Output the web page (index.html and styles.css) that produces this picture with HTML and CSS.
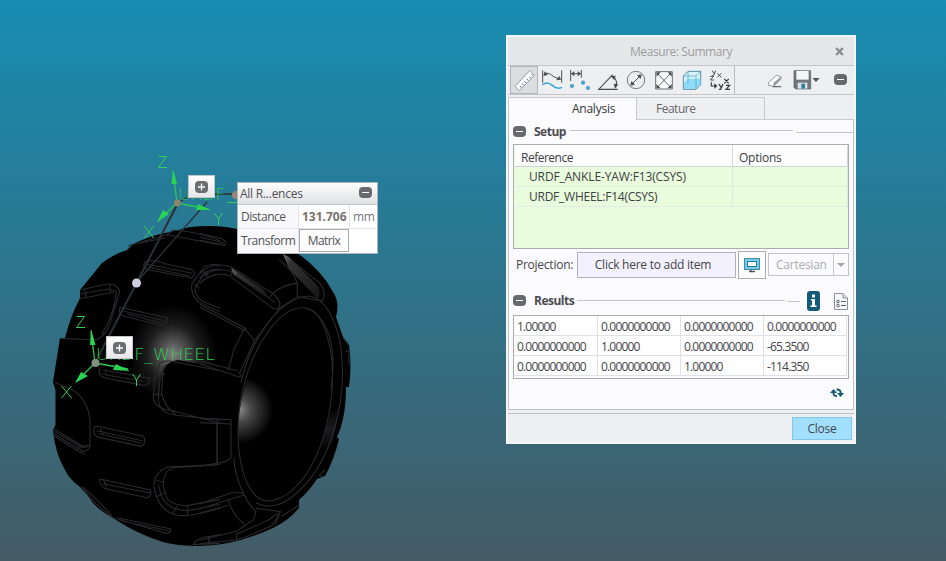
FILE: index.html
```html
<!DOCTYPE html>
<html lang="en">
<head>
<meta charset="utf-8">
<title>Measure: Summary</title>
<link rel="stylesheet" href="styles.css">
</head>
<body>
<main class="viewport">
<svg class="scene" width="946" height="561" viewBox="0 0 946 561">
  <defs>
    <radialGradient id="shine"><stop offset="0" stop-color="#808080"/><stop offset=".25" stop-color="#545454"/><stop offset=".6" stop-color="#1b1b1b"/><stop offset="1" stop-color="#000"/></radialGradient>
    <radialGradient id="hub" gradientUnits="userSpaceOnUse" cx="239" cy="410" r="34"><stop offset="0" stop-color="#8b8b8b"/><stop offset=".35" stop-color="#474747"/><stop offset="1" stop-color="#000"/></radialGradient>
    <linearGradient id="glint" x1="0" y1="0" x2="1" y2="1"><stop offset="0" stop-color="#777"/><stop offset=".2" stop-color="#333"/><stop offset="1" stop-color="#151517"/></linearGradient>
    <linearGradient id="lip" x1="0" y1="0" x2="0" y2="1"><stop offset="0" stop-color="#000"/><stop offset=".5" stop-color="#1c1c1e"/><stop offset="1" stop-color="#000"/></linearGradient>
    <clipPath id="rim"><path d="M306 308C282 304 255 347 243 393C233 431 238 477 257 497C268 507 291 497 307 473C329 439 337 384 330 348C325 323 318 311 306 308Z"/></clipPath>
  </defs>
  <path d="M127 250L135 243Q155 234 170 232L190 227Q217 224 237 229L270 239L300 255Q322 271 333 292Q340 302 336 317L343 337L349 345Q352 365 349 387H346Q346 418 337 437L339 439Q334 460 325 476L317 479Q309 491 299 500V508Q289 520 275 527Q235 546 200 546Q177 546 163 542Q137 534 113 518Q101 512 93 503Q87 494 80 487Q70 480 65 470Q55 453 53 430L55.500 425V390L53 382L60 338H65Q71 315 80 298V290L102 263Q114 254 127 250Z"/>
  <ellipse cx="173" cy="354" rx="44" ry="49" fill="url(#shine)"/>
  <path d="M160 398V378Q163 362 178 360Q215 366 241 375L231 421Q198 417 173 418Q160 414 160 398Z"/>
  <g clip-path="url(#rim)"><circle cx="239" cy="410" r="34" fill="url(#hub)"/></g>
  <path d="M331 413L340 406L332 446L318 452Z" fill="url(#lip)"/>
  <g class="edges">
    <path d="M306 308C280 304 252 347 242 393C234 432 238 478 256 496C269 508 291 497 307 473C329 439 337 384 330 348C325 323 318 311 306 308Z"/>
    <path d="M241 383C249 344 277 298 309 296C325 298 336 319 341 348C348 405 329 462 301 489C283 507 270 509 256 503"/>
  </g>
  <g class="edges" transform="translate(40 220) scale(.33333)">
    <path d="M315 125Q335 117 380 132L460 150Q470 162 455 174L325 149Q303 144 315 125ZM322 133L456 160M325 142L450 168"/>
    <path d="M240 262Q235 281 247 287L370 318L382 305V293L260 266ZM252 274L376 303M262 282L371 311"/>
    <path d="M120 210L190 194Q232 185 239 214L217 288Q200 350 167 360L60 355M120 222L205 207L231 215M120 236L220 217M133 210L139 232M210 193L211 217M229 218Q222 285 185 343"/>
    <path d="M180 444Q170 466 196 474L310 496Q330 495 328 475L190 450M187 463L310 484M195 450L202 470"/>
    <path d="M539 138Q501 125 485 151L456 190Q449 219 475 245L539 275M539 148Q505 145 490 164L468 199Q458 219 484 242L539 265M485 151L502 170M462 190L478 205"/>
    <path d="M360 430L343 478L340 535Q350 568 390 570L540 610M380 433Q356 465 355 540Q360 580 405 585L540 600M370 437L365 520Q370 550 399 578M360 458L375 462M343 524L364 525M399 572L406 585M360 430Q375 420 394 424L540 452"/>
    <path d="M265 77L380 44L400 31M280 73L375 54M400 31Q450 30 540 62M380 44L540 74M260 92L275 76"/>
    <path d="M45 487L92 507Q145 535 150 605V680Q146 692 129 694L43 643M43 628L129 679L143 675"/>
  </g>
  <g class="edges" transform="translate(40 390) scale(.33333)">
    <path d="M163 110Q155 139 181 143L304 169Q320 161 311 139L175 109ZM170 122L310 153M176 131L304 159M180 113L190 135"/>
    <path d="M179 268Q180 294 205 298L321 323Q338 320 331 300L195 270ZM189 281L334 310M190 268L200 292"/>
    <path d="M125 290Q180 333 220 384Q178 355 145 316ZM225 385L380 430Q397 427 390 416L236 384M244 392L387 422"/>
    <path d="M540 223L385 231Q342 245 342 289Q352 359 405 374Q440 385 540 355M540 224L400 233Q367 245 370 289L382 328Q407 347 440 347L540 329M345 270L370 277M351 320L374 308M399 370L411 348M442 378L444 348M355 284L363 315Q380 360 444 362L540 343M532 100V222"/>
    <path d="M40 123L118 168Q130 178 150 166M41 137L113 182L133 192M118 168L109 184M540 434L485 443Q458 457 460 464L540 460M508 439L507 462"/>
  </g>
  <g class="edges" transform="translate(200 220) scale(.33333)">
    <path d="M0 160Q40 120 95 142L211 216Q240 235 240 252Q234 278 211 259L88 167Q43 151 0 189M0 174Q43 138 93 154L225 248M99 145L92 167M219 219L207 236M17 154L25 166"/>
    <path d="M0 253L134 324L163 363L118 461Q128 466 118 471L0 432M0 261L135 333M134 324L102 388L84 453M0 423L115 453M163 363L240 263M219 219Q249 194 292 190V230L368 243M237 119Q300 169 292 215M260 110L360 190Q380 218 368 243M240 263Q285 236 292 230M0 40L65 56Q83 66 75 76L0 61M0 51L72 69M430 355L447 376M435 395L447 390V435M325 265Q420 320 393 510"/>
  </g>
  <g class="edges" transform="translate(200 390) scale(.33333)">
    <path d="M0 85L93 89V202Q83 217 54 219L0 229M51 87V219M93 102L0 98M102 202Q102 251 130 310Q148 349 168 364L161 389Q142 400 110 424L0 451M130 310L102 306L0 341M0 356L81 331L132 315M0 369L85 346M85 332Q101 379 133 402M168 355L242 365L217 405Q170 430 110 450L0 461M110 429V450M25 440L28 460M235 370L205 390L110 433M240 366L235 382L225 407M298 345L245 379M375 238L358 255L370 261"/>
  </g>
  <path d="M231 268L234 275L271 300L263 289Z" fill="url(#glint)"/>
  <path d="M283 254L289 257L317 285Q322 292 318 299L289 269Z" fill="url(#glint)"/>
  <g class="measure">
    <path d="M178 203L95 363" stroke-width="2"/><path d="M177 203L188 197M207 202L136 283" stroke-width="1.300"/><path d="M214 194H235" stroke-width="1.500"/>
  </g>
  <circle cx="136.500" cy="283" r="4.500" fill="#cfd0df"/>
  <circle cx="236" cy="195" r="4" fill="#9b8475"/>
  <g class="axes">
    <path d="M177 203L173 171M177 203L208 209M177 203L158 221"/>
    <path class="head" d="M173 169L171.500 184H177ZM211 210L196 210L198 204ZM157 222L163 210L169 214Z"/>
  </g>
  <g class="axes">
    <path d="M95 363L91 331M95 363L128 369M95 363L77 381"/>
    <path class="head" d="M91 329L90 345H95.500ZM130 371L113 370L116 364ZM75 383L81 372L88 376Z"/>
  </g>
  <circle cx="177.500" cy="203" r="3.500" fill="#8c856b"/><circle cx="95.500" cy="363" r="4" fill="#819080"/>
  <g class="cad">
    <text x="178" y="200" textLength="47" lengthAdjust="spacingAndGlyphs">URDF</text><path d="M227 202.500H237"/>
    <text x="96" y="360" textLength="119" lengthAdjust="spacingAndGlyphs">URDF_WHEEL</text>
    <path d="M158.500 156.500H166.500L158.500 167.500H167M144.500 226L153.500 238M153.500 226L144.500 238M214.500 213L218.500 219L222.500 213M218.500 219V225M76.500 316.500H84.500L76.500 327.500H85M61.500 386L71.500 398M71.500 386L61.500 398M132.500 374L136.500 380L140.500 374M136.500 380V386"/>
  </g>
</svg>

<button class="tag tag-yaw" aria-label="Expand"><svg width="13" height="12"><rect width="13" height="12" rx="4" fill="#6c6d72"/><path d="M3 6H10M6.500 2.500V9.500" stroke="#fff" stroke-width="1.300"/></svg></button>
<button class="tag tag-wheel" aria-label="Expand"><svg width="13" height="12"><rect width="13" height="12" rx="4" fill="#6c6d72"/><path d="M3 6H10M6.500 2.500V9.500" stroke="#fff" stroke-width="1.300"/></svg></button>

<section class="callout">
  <header><span>All R...ences</span><i class="minus"></i></header>
  <div class="callout-row"><span class="lab">Distance</span><b>131.706</b><span class="unit">mm</span></div>
  <div class="callout-row second"><span class="lab">Transform</span><button class="matrix">Matrix</button><span></span></div>
</section>

<section class="dialog">
  <header class="title"><span>Measure: Summary</span>
    <svg class="x" width="9" height="9"><path d="M1.200 1L7.800 8M7.800 1L1.200 8" stroke="#8d8e91" stroke-width="2.500"/></svg>
  </header>
  <nav class="toolbar">
    <span class="tool active"><svg viewBox="30 108 84 84"><path d="M45 169L90 121L103 136L58 182Z" fill="#fbfcfd" stroke="#888b90" stroke-width="2.500"/><path d="M60 168L64 173M67 161L71 166M74 154L78 159M81 147L85 152M88 140L92 145M95 133L98 137" stroke="#22638c" stroke-width="2.700"/></svg></span>
    <span class="tool"><svg viewBox="114 108 84 84"><path d="M128 121V158M185 121V158M132 134C150 119 156 147 181 145" fill="none" stroke="#4b4d50" stroke-width="3"/><path d="M130 138L134 124L144 135ZM183 149L168 151L178 138Z" fill="#4b4d50"/><path d="M127 164Q143 153 157 166T186 172" fill="none" stroke="#35a4cf" stroke-width="4.500"/></svg></span>
    <span class="tool"><svg viewBox="198 108 84 84"><path d="M212 120V153M244 120V143M215 131H241" stroke="#4b4d50" stroke-width="3"/><path d="M213 131L223 123V139ZM243 131L233 123V139Z" fill="#4b4d50"/><g fill="#42a8d0" stroke="#22779b"><circle cx="216" cy="168" r="5.500"/><circle cx="249" cy="158" r="5.500"/><circle cx="264" cy="174" r="5.500"/></g></svg></span>
    <span class="tool"><svg viewBox="282 108 84 84"><path d="M338 134L296 178H353M342 142Q354 153 347 171" fill="none" stroke="#4b4d50" stroke-width="3.300"/><path d="M332 138L347 137L343 151ZM341 161L355 163L345 176Z" fill="#4b4d50"/></svg></span>
    <span class="tool"><svg viewBox="366 108 84 84"><circle cx="408" cy="150" r="26" fill="none" stroke="#6a6c6e" stroke-width="2.700"/><path d="M395 163L421 137" stroke="#4b4d50" stroke-width="3"/><path d="M425 133L422 147L411 136ZM391 167L394 153L405 164Z" fill="#4b4d50"/></svg></span>
    <span class="tool"><svg viewBox="450 108 84 84"><path d="M467 125H517V177H467Z" fill="#fafafa" stroke="#5f6264" stroke-width="2.700"/><path d="M474 132L510 170M510 132L474 170" stroke="#4b4d50" stroke-width="2.500"/><path d="M469 127H482L470 140ZM515 127V140L503 127ZM469 175V162L482 175ZM515 175H502L515 162Z" fill="#4b4d50"/></svg></span>
    <span class="tool"><svg viewBox="-6 108 84 84"><path d="M10 138L24 124H62V164L48 178H10Z" fill="#d7f3fd" stroke="#3a7994" stroke-width="2.500"/><path d="M12 158L25 146H61V163L47 176H12Z" fill="#8edafa"/><path d="M10 138H48L62 124M48 138V178M24 125V160" fill="none" stroke="#4a9dbb" stroke-width="2"/></svg></span>
    <span class="tool"><svg viewBox="78 108 84 84"><g fill="none" stroke="#4b4c50" stroke-width="3"><path d="M97 122L102 131M107 122L101 136H97M90 139H101L91 150H102M112 130L124 142M124 130L112 142"/><path stroke="#37383b" stroke-width="3.500" d="M94 157V168H107M117 162L123 172M129 162L122 178H117M133 147L146 160M146 147L133 160M138 166H149L138 178H150"/></g><path d="M103 160L112 168L103 176Z" fill="#37383b"/></svg></span>
    <span class="divider"></span>
    <span class="tool eraser"><svg viewBox="243 108 84 84"><path d="M266 158L289 136L303 140V147L281 169L266 166Z" fill="#fff" stroke="#77797c" stroke-width="2.300"/><path d="M280 159L302 140V148L281 169Z" fill="#999da3"/><path d="M278 170H304" stroke="#606266" stroke-width="3.500"/></svg></span>
    <span class="tool save"><svg viewBox="338 108 84 84"><path d="M341 122H391V177H346L341 172Z" fill="#71767d" stroke="#565b61" stroke-width="2"/><path d="M348 123H385V149H348Z" fill="#f5f6f7"/><path d="M352 158H381V176H352Z" fill="#dce3e8"/><path d="M363 161H374V176H363Z" fill="#317d9d"/><path d="M396 144H418L407 156Z" fill="#55575b"/></svg></span>
    <i class="minus tool-minus"></i>
  </nav>
  <div class="tabs"><div class="tab current"><span>Analysis</span></div><div class="tab"><span class="t-feature">Feature</span></div><div class="tab-rest"></div></div>
  <div class="body">
    <div class="section setup"><i class="minus"></i><h2>Setup</h2><span class="rule r1"></span><span class="rule r2"></span></div>
    <div class="refs">
      <div class="ref head"><span class="t-ref">Reference</span><span>Options</span></div>
      <div class="ref"><span class="t-yaw">URDF_ANKLE-YAW:F13(CSYS)</span><span></span></div>
      <div class="ref"><span>URDF_WHEEL:F14(CSYS)</span><span></span></div>
    </div>
    <div class="projection"><label>Projection:</label><button class="collector">Click here to add item</button>
      <button class="screen" aria-label="Screen"><svg width="16" height="15"><rect x=".5" y=".5" width="15" height="11" fill="#77cbe3" stroke="#438ba4"/><rect x="3.500" y="3.500" width="9" height="5" fill="#f4fbff" stroke="#2b7898"/><path d="M5 13.500H11M7 12V13" stroke="#4b5660" stroke-width="1.500"/></svg></button>
      <div class="select"><span>Cartesian</span><i></i></div></div>
    <div class="section results"><i class="minus"></i><h2>Results</h2><span class="rule r3"></span><span class="rule r4"></span>
      <svg class="info" width="13" height="20"><rect width="13" height="20" rx="3" fill="#145b77"/><path d="M5 3.500H8V6.500H5ZM4 8H8V14.500H9.500V16H3.500V14.500H5V9.500H4Z" fill="#fff"/></svg>
      <svg class="list" width="14" height="17"><path d="M.5 .5H9L13.500 5V16.500H.5Z" fill="#f7f8f9" stroke="#909396"/><path d="M9 .5V5H13.500" fill="#ddd" stroke="#909396"/><path d="M7 8.500H12M7 12.500H12" stroke="#626466"/><circle cx="4" cy="8.500" r="1.300" fill="none" stroke="#626466"/><circle cx="4" cy="12.500" r="1.300" fill="none" stroke="#626466"/></svg></div>
    <div class="matrix-grid">
      <span>1.00000</span><span>0.0000000000</span><span>0.0000000000</span><span>0.0000000000</span>
      <span>0.0000000000</span><span>1.00000</span><span>0.0000000000</span><span>-65.3500</span>
      <span>0.0000000000</span><span>0.0000000000</span><span>1.00000</span><span>-114.350</span>
    </div>
    <svg class="refresh" width="14" height="10"><path d="M3.300 4Q3.300 8.300 7 8M6.500 1.500Q10.700 1.200 10.700 5" fill="none" stroke="#135b76" stroke-width="2"/><path d="M0 5L3.500 1L7 5ZM7 5H14L10.500 9Z" fill="#135b76"/></svg>
  </div>
  <footer><button class="close">Close</button></footer>
</section>
</main>
</body>
</html>
```
FILE: styles.css
```css
* { box-sizing: border-box; }
body { margin: 0; overflow: hidden; }
button { margin: 0; padding: 0; font: inherit; color: inherit; letter-spacing: inherit; border-radius: 0; white-space: nowrap; }
.viewport { position: relative; width: 946px; height: 561px; font: 12px/16px "Open Sans", "Noto Sans", sans-serif; letter-spacing: -.25px; color: #444549; background: linear-gradient(#178db2 0%, #445b65 100%); }
span, b, h2, label { white-space: nowrap; }
.scene { display: block; }
.edges { fill: none; stroke: #29292c; }
.edges path { vector-effect: non-scaling-stroke; stroke-width: 1.1; }
.measure { fill: none; stroke: #2b3034; }
.axes { fill: none; stroke: #2bc953; stroke-width: 1.3; }
.axes .head { fill: #2bd354; stroke: none; }
.cad { fill: #2fc653; font: 200 16px "DejaVu Sans", sans-serif; letter-spacing: 0; }
.cad path { fill: none; stroke: #34cf57; stroke-width: 1; }

.minus { display: block; width: 13px; height: 11px; border-radius: 4px; background: linear-gradient(#fff, #fff) center / 7px 1px no-repeat #68696e; flex: none; }
.tag { position: absolute; width: 27px; height: 23px; display: grid; place-items: center; background: linear-gradient(#fff, #e7e7eb); border: 1px solid #c2c5cc; }
.tag-yaw { left: 188px; top: 175px; }
.tag-wheel { left: 106px; top: 336px; }

.callout { position: absolute; left: 237px; top: 182px; width: 141px; height: 72px; border: 1px solid #aeb5bb; background: #fff; color: #505155; }
.callout header { height: 22px; display: flex; align-items: center; justify-content: space-between; padding: 0 5px 0 2px; background: linear-gradient(#fdfdfd, #dfe0e3); border-bottom: 1px solid #c5c7cb; }
.callout header .minus { margin-top: -2px; }
.callout-row { height: 24px; display: grid; grid-template-columns: 61px 51px 1fr; align-items: center; border-bottom: 1px solid #e4e5e9; }
.callout-row > span, .callout-row > b { line-height: 23px; height: 23px; border-right: 1px solid #e2e3e9; padding-left: 3px; }
.callout-row .lab { background: #f9f9fb; letter-spacing: -.45px; }
.callout-row > :last-child { border-right: 0; }
.callout-row .unit { color: #77787b; }
.callout-row b { color: #77736e; letter-spacing: 0; }
.callout-row.second { border-bottom: 0; height: 23px; }
.matrix { width: 50px; height: 23px; background: #fdfdfe; border: 1px solid #a6a8ad; letter-spacing: -.6px; }

.dialog { position: absolute; left: 506px; top: 35px; width: 350px; height: 409px; border: 2px solid #f4f6f8; background: #eeeff1; }
.title { height: 29px; display: flex; align-items: center; padding: 1px 10px 0 122px; justify-content: space-between; color: #9b9ca0; background: #e6e7e9; border-bottom: 1px solid #c4c5c9; letter-spacing: -.43px; }
.x { margin-top: -1px; }
.toolbar { height: 29px; display: flex; padding-left: 2px; border-bottom: 1px solid #c6c7ca; align-items: flex-start; }
.tool { width: 28px; height: 28px; flex: none; }
.tool svg { width: 28px; height: 28px; display: block; }
.active { background: #dcdde0; box-shadow: inset 0 0 0 1px #b3b4b9; }
.divider { width: 1px; height: 28px; background: #babbc0; }
.eraser { margin-left: 26px; }
.save { margin-left: 4px; }
.tool-minus { margin: 8px 0 0 13px; }
.tabs { height: 25px; display: flex; padding-top: 2px; }
.tab { width: 128px; height: 23px; border: 1px solid #c9cacf; border-left: 0; padding: 3px 0 0 19px; color: #66676b; }
.t-feature { letter-spacing: -.5px; }
.current { background: #fbfbfd; border-bottom: 0; border-left: 1px solid #c9cacf; padding-left: 63px; width: 129px; color: #333438; }
.tab-rest { flex: 1; border-bottom: 1px solid #c9cacf; }
.body { width: 346px; height: 290px; padding-left: 4px; background: #fbfbfd; border: 1px solid #bfc0c6; border-top: 0; }
.section { display: flex; align-items: center; }
.section .minus { margin-top: -1px; }
.section h2 { margin: 0 0 0 8px; font-size: 12px; line-height: 16px; color: #4b4c50; letter-spacing: -.5px; }
.rule { height: 1px; background: #c6c7cb; flex: none; }
.setup { height: 24px; }
.r1 { width: 223px; margin: -3px 3px 0 auto; }
.r2 { width: 57px; }
.refs { width: 336px; height: 105px; border: 1px solid #abacb2; background: #e9fcdc; color: #3c4045; padding-left: 1px; }
.ref { width: 333px; height: 20px; display: grid; grid-template-columns: 218px 115px; border-bottom: 1px solid #dfeee4; line-height: 20px; }
.ref span { padding-left: 14px; border-right: 1px solid #dceae3; }
.ref .t-yaw { letter-spacing: -.13px; }
.ref.head { height: 22px; background: #fdfdfe; border-color: #cdd2d4; }
.ref.head span { line-height: 25px; padding-left: 6px; border-color: #d5d6db; }
.ref .t-ref { letter-spacing: -.5px; }
.projection { height: 28px; margin-top: 2px; width: 336px; display: flex; align-items: center; }
.projection label { width: 64px; padding-left: 3px; }
.collector { width: 159px; height: 26px; border: 1px solid #b2b1bd; background: #f4f1fe; padding-right: 7px; }
.screen { width: 28px; height: 28px; margin-left: 2px; display: grid; place-items: center; background: #fcfcfd; border: 1px solid #a9abaf; }
.select { width: 81px; height: 23px; margin: -1px 0 0 2px; display: flex; border: 1px solid #c2c4ca; color: #aaabb0; line-height: 22px; }
.select span { width: 65px; padding-left: 7px; border-right: 1px solid #c7c8cc; }
.select i { border: 4px solid transparent; border-top-color: #a3a4a9; margin: 9px 0 0 3px; height: 0; }
.results { height: 36px; padding-top: 8px; }
.r3 { width: 208px; margin: -2px 2px 0 auto; }
.r4 { width: 13px; margin-right: 7px; }
.info { margin-right: 14px; flex: none; }
.list { margin-right: 5px; flex: none; }
.matrix-grid { width: 336px; height: 64px; border: 1px solid #abacb2; display: grid; grid-template-columns: 84px 83px 83px 83px; grid-template-rows: 20px 20px 20px; background: #fefefe; }
.matrix-grid span { border-right: 1px solid #e0e1e5; border-bottom: 1px solid #e0e1e5; padding-left: 3px; line-height: 21px; letter-spacing: -.82px; }
.refresh { display: block; margin: 9px 0 0 317px; }
footer { height: 34px; margin-top: 3px; border-top: 1px solid #c3c4c8; padding: 3px 2px 0 0; display: flex; justify-content: flex-end; }
.close { width: 60px; height: 23px; background: #a2dffe; border: 1px solid #84c8e9; }
```
